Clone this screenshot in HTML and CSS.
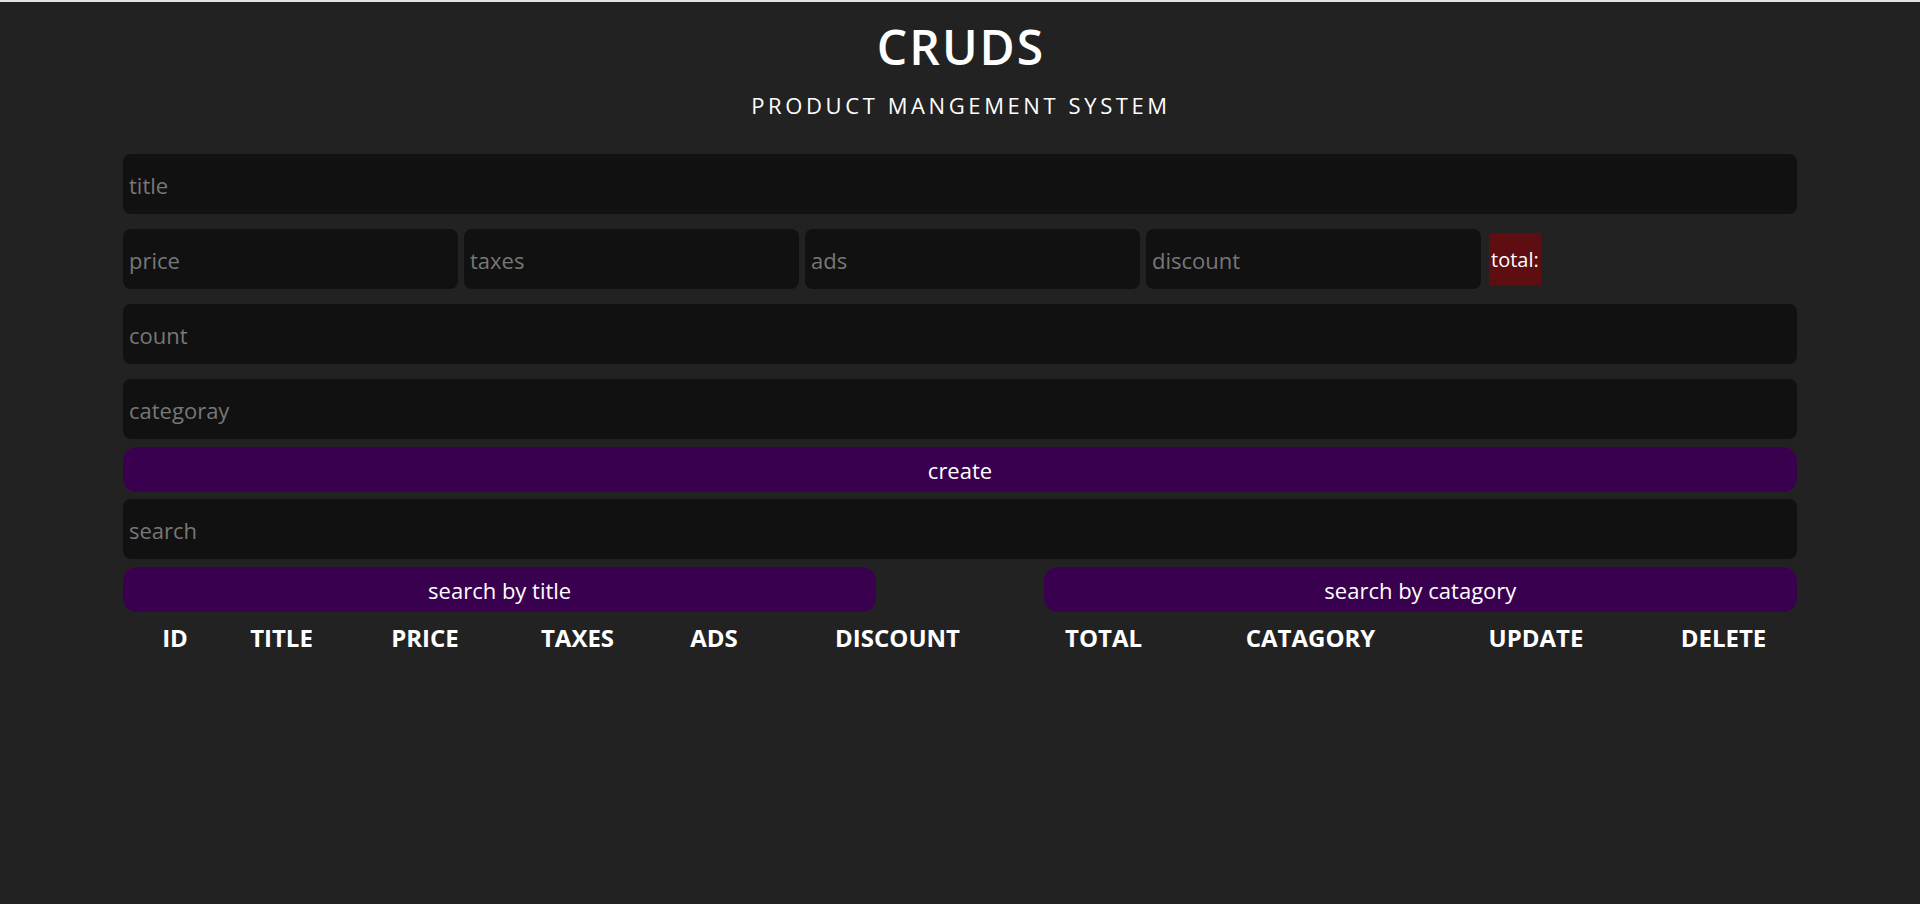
FILE: index.html
```html
<!DOCTYPE html>
<html lang="en">
<head>
<meta charset="utf-8">
<title>CRUDS</title>
<link rel="stylesheet" href="styles.css">
</head>
<body>
<div class="crud">
  <header class="head">
    <h1 class="logo">CRUDS</h1>
    <p class="subtitle">PRODUCT MANGEMENT SYSTEM</p>
  </header>
  <div class="inputs">
    <input class="field" type="text" placeholder="title">
    <div class="price-row">
      <input class="field small" type="number" placeholder="price">
      <input class="field small" type="number" placeholder="taxes">
      <input class="field small" type="number" placeholder="ads">
      <input class="field small" type="number" placeholder="discount">
      <small class="total">total:</small>
    </div>
    <input class="field" type="number" placeholder="count">
    <input class="field" type="text" placeholder="categoray">
    <button class="btn create">create</button>
  </div>
  <div class="search-block">
    <input class="field" type="text" placeholder="search">
    <div class="search-btns">
      <button class="btn half">search by title</button>
      <button class="btn half">search by catagory</button>
    </div>
  </div>
  <table class="outputs">
    <colgroup>
      <col class="c1"><col class="c2"><col class="c3"><col class="c4"><col class="c5">
      <col class="c6"><col class="c7"><col class="c8"><col class="c9"><col class="c10">
    </colgroup>
    <thead>
      <tr>
        <th>ID</th><th>TITLE</th><th>PRICE</th><th>TAXES</th><th>ADS</th>
        <th>DISCOUNT</th><th>TOTAL</th><th>CATAGORY</th><th>UPDATE</th><th>DELETE</th>
      </tr>
    </thead>
    <tbody></tbody>
  </table>
</div>
</body>
</html>
```

FILE: styles.css
```css
* { box-sizing: border-box; }

html, body {
  margin: 0;
  padding: 0;
  background: #222222;
  color: #ffffff;
  font-family: "Open Sans", "Noto Sans", sans-serif;
}

body {
  border-top: 2px solid #e3e3e3;
  min-height: 904px;
}

.crud {
  width: 1674px;
  margin: 0 auto;
}

.head {
  text-align: center;
}

.logo {
  margin: 12px 0 0;
  font-size: 48px;
  line-height: 66px;
  font-weight: 600;
  letter-spacing: 2px;
  text-indent: 2px;
}

.subtitle {
  margin: 10px 0 0;
  font-size: 22px;
  line-height: 30px;
  font-weight: 400;
  letter-spacing: 3.6px;
  text-indent: 2px;
}

.inputs {
  margin-top: 34px;
  display: flex;
  flex-direction: column;
  gap: 15px;
}

.field {
  display: block;
  width: 100%;
  height: 60px;
  border: none;
  outline: none;
  border-radius: 8px;
  background: #111111;
  color: #ffffff;
  padding: 2px 6px 0;
  font-family: "Open Sans", "Noto Sans", sans-serif;
  font-size: 22px;
  -moz-appearance: textfield;
}

.field::-webkit-outer-spin-button,
.field::-webkit-inner-spin-button {
  -webkit-appearance: none;
  margin: 0;
}

.field::placeholder {
  color: #777777;
}

.price-row {
  display: flex;
  align-items: center;
  gap: 6px;
}

.field.small {
  width: 335px;
  flex: 0 0 335px;
}

.total {
  margin-left: 2px;
  height: 52px;
  padding: 0 2px;
  display: flex;
  align-items: center;
  background: #5e0e10;
  color: #ffffff;
  font-size: 20px;
}

.btn {
  display: block;
  height: 45px;
  border: none;
  border-radius: 14px;
  background: #3a0050;
  color: #ffffff;
  font-family: "Open Sans", "Noto Sans", sans-serif;
  font-size: 22px;
  cursor: pointer;
}

.create {
  width: 100%;
  margin-top: -7px;
}

.search-block {
  margin-top: 7px;
  display: flex;
  flex-direction: column;
  gap: 8px;
}

.search-btns {
  display: flex;
  justify-content: space-between;
}

.half {
  width: 45%;
}

.outputs {
  width: 100%;
  margin-top: 9px;
  border-collapse: collapse;
  table-layout: fixed;
}

.outputs th {
  padding: 0;
  font-size: 24px;
  font-weight: 700;
  line-height: 33px;
  text-align: center;
}

.c1 { width: 104px; }
.c2 { width: 109px; }
.c3 { width: 178px; }
.c4 { width: 127px; }
.c5 { width: 146px; }
.c6 { width: 221px; }
.c7 { width: 191px; }
.c8 { width: 223px; }
.c9 { width: 228px; }
.c10 { width: 147px; }
```
